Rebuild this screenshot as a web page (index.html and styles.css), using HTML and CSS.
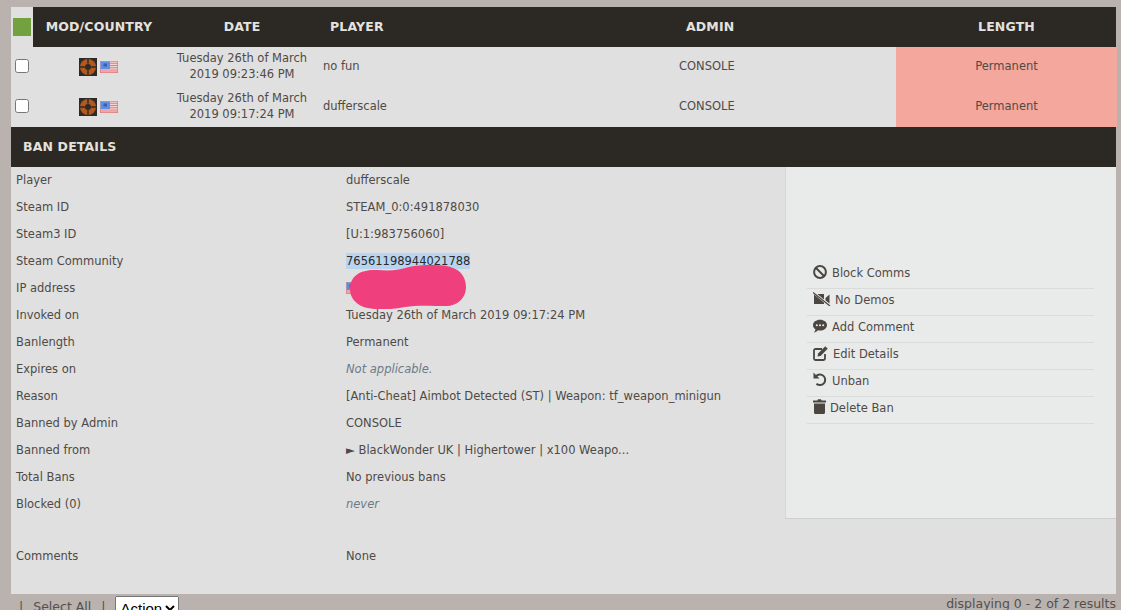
FILE: index.html
```html
<!DOCTYPE html>
<html lang="en">
<head>
<meta charset="utf-8">
<title>Bans</title>
<link rel="stylesheet" href="styles.css">
</head>
<body>
<svg class="defs" width="0" height="0" aria-hidden="true">
  <defs>
    <g id="tf">
      <rect width="18" height="18" fill="#2b2a29"/>
      <circle cx="9" cy="9" r="8" fill="#b4581c"/>
      <path d="M9 1v4.800M9 12.200v4.800M1 9h4.800M12.200 9h4.800" stroke="#2b2a29" stroke-width="1.400"/>
      <circle cx="9" cy="9" r="3" fill="#2b2a29"/>
    </g>
    <g id="us">
      <rect width="18" height="12" fill="#b5706c"/>
      <rect x=".5" y=".5" width="17" height="11" fill="#f2d6d6"/>
      <path d="M9 2.200h9M9 4.500h9M9 6.800h9M0 9h18M0 11h18" stroke="#e77" stroke-width="1.100"/>
      <rect x=".5" y=".5" width="9.500" height="7.500" fill="#5c8ee6"/>
      <rect x="3.500" y="2.500" width="3.500" height="3" fill="#3f5fa8"/>
    </g>
  </defs>
</svg>
<main class="panel">
  <div class="row head">
    <div class="chk-head"><span class="green"></span></div>
    <div class="center">MOD/COUNTRY</div>
    <div class="center">DATE</div>
    <div class="pad">PLAYER</div>
    <div class="pad">ADMIN</div>
    <div class="center">LENGTH</div>
  </div>
  <div class="row ban">
    <div class="chk"><input type="checkbox"></div>
    <div class="icons"><svg width="18" height="18"><use href="#tf"/></svg><svg width="18" height="12"><use href="#us"/></svg></div>
    <div class="center">Tuesday 26th of March<br>2019 09:23:46 PM</div>
    <div>no fun</div>
    <div>CONSOLE</div>
    <div class="center perm">Permanent</div>
  </div>
  <div class="row ban">
    <div class="chk"><input type="checkbox"></div>
    <div class="icons"><svg width="18" height="18"><use href="#tf"/></svg><svg width="18" height="12"><use href="#us"/></svg></div>
    <div class="center">Tuesday 26th of March<br>2019 09:17:24 PM</div>
    <div>dufferscale</div>
    <div>CONSOLE</div>
    <div class="center perm">Permanent</div>
  </div>
  <h2 class="details-title">BAN DETAILS</h2>
  <div class="details">
    <div class="info">
      <dl class="facts">
        <dt>Player</dt><dd>dufferscale</dd>
        <dt>Steam ID</dt><dd>STEAM_0:0:491878030</dd>
        <dt>Steam3 ID</dt><dd>[U:1:983756060]</dd>
        <dt>Steam Community</dt><dd><span class="selected">76561198944021788</span></dd>
        <dt>IP address</dt><dd class="ip"><svg class="ipflag" width="18" height="12"><use href="#us"/></svg><svg class="blob" width="118" height="44" viewBox="0 0 120 44" preserveAspectRatio="none"><path d="M2 24C2 10 14 4 30 5c14 1 22 0 32-3 16-3 36-2 42 0 12 3 16 12 16 20 0 12-10 19-20 19-16 0-30-1-42 1-14 3-32 3-42 0C8 39 2 33 2 24z" fill="#f03f7d"/></svg></dd>
        <dt>Invoked on</dt><dd>Tuesday 26th of March 2019 09:17:24 PM</dd>
        <dt>Banlength</dt><dd>Permanent</dd>
        <dt>Expires on</dt><dd class="muted">Not applicable.</dd>
        <dt>Reason</dt><dd>[Anti-Cheat] Aimbot Detected (ST) | Weapon: tf_weapon_minigun</dd>
        <dt>Banned by Admin</dt><dd>CONSOLE</dd>
        <dt>Banned from</dt><dd>► BlackWonder UK | Highertower | x100 Weapo...</dd>
        <dt>Total Bans</dt><dd>No previous bans</dd>
        <dt>Blocked (0)</dt><dd class="muted">never</dd>
      </dl>
      <dl class="facts comments">
        <dt>Comments</dt><dd>None</dd>
      </dl>
    </div>
    <aside class="side">
      <ul class="actions">
        <li><svg class="ic i-ban" width="14" height="14" viewBox="0 0 14 14"><circle cx="7" cy="7" r="5.900" fill="none" stroke="#4b4640" stroke-width="2"/><path d="M3 3l8 8" stroke="#4b4640" stroke-width="2"/></svg>Block Comms</li>
        <li><svg class="ic i-vid" width="18" height="14" viewBox="0 0 18 14"><path d="M1 2h10v10H1zM12.500 6l4-3.500v9l-4-3z" fill="#4b4640"/><path d="M0 0l17 14" stroke="#e9ebea" stroke-width="2.400"/><path d="M0 .5l17 13.500" stroke="#4b4640" stroke-width="1.200"/></svg>No Demos</li>
        <li><svg class="ic i-com" width="14" height="14" viewBox="0 0 14 14"><path d="M7 .8c3.900 0 7 2.400 7 5.400s-3.100 5.400-7 5.400c-.8 0-1.500-.1-2.200-.3C3.800 12.600 2.500 13.400.8 13.600c1-.9 1.500-2 1.600-3.300C.9 9.300 0 7.900 0 6.200 0 3.200 3.100.8 7 .8z" fill="#4b4640"/><g fill="#e9ebea"><circle cx="3.800" cy="6.200" r="1.050"/><circle cx="7" cy="6.200" r="1.050"/><circle cx="10.200" cy="6.200" r="1.050"/></g></svg>Add Comment</li>
        <li><svg class="ic i-edit" width="16" height="16" viewBox="0 0 16 16"><path d="M9 4H2.500C1.700 4 1 4.700 1 5.500V13.500C1 14.300 1.700 15 2.500 15H10.500C11.300 15 12 14.300 12 13.500V9" fill="none" stroke="#4b4640" stroke-width="1.800"/><path d="M4.500 11.500l.6-3L12.300 1.300l2.400 2.400L7.500 10.900z" fill="#4b4640"/></svg>Edit Details</li>
        <li><svg class="ic i-undo" width="14" height="15" viewBox="0 0 14 15"><path d="M3 4.200A5.300 5.300 0 1 1 3.400 11.800" fill="none" stroke="#4b4640" stroke-width="2"/><path d="M.5 .5v6h6z" fill="#4b4640"/></svg>Unban</li>
        <li><svg class="ic i-trash" width="13" height="15" viewBox="0 0 13 15"><path d="M0 1.500h4.300L5 .2h3l.7 1.300H13v2H0zM1 4.500h11V13.500c0 .8-.6 1.500-1.400 1.500H2.400C1.600 15 1 14.300 1 13.500z" fill="#4b4640"/></svg>Delete Ban</li>
      </ul>
    </aside>
  </div>
</main>
<footer class="foot">
  <div class="foot-left"><span>|</span><span>Select All</span><span>|</span><select><option>Action</option></select></div>
  <div>displaying 0 - 2 of 2 results</div>
</footer>
</body>
</html>
```
FILE: styles.css
```css
html, body { margin: 0; height: 100%; overflow: hidden; }
body {
  background: #b9b2ae;
  font-family: "DejaVu Sans", Verdana, sans-serif;
  font-size: 11.5px;
  color: #4f4a46;
  padding: 7px 5px 0 11px;
  box-sizing: border-box;
}
.defs { position: absolute; }
.panel { background: #e0e0e0; height: 587px; display: flex; flex-direction: column; }
.row {
  display: grid;
  grid-template-columns: 22px 132px 154px 356px 221px 221px;
  height: 40px;
  line-height: 16px;
}
.row > div { display: flex; align-items: center; }
.row .center { justify-content: center; text-align: center; }
.ban > div { padding-bottom: 2px; }
.ban > div:nth-child(4), .ban > div:nth-child(5) { padding-left: 4px; }
.head { background: #2c2824; color: #e4e2df; font-weight: 700; font-size: 12.5px; letter-spacing: .15px; }
.row > .pad { padding-left: 11px; }
.chk-head { background: #e0e0e0; justify-content: center; }
.green { width: 18px; height: 18px; background: #74a13f; display: block; }
.chk { justify-content: center; }
.chk input { width: 14px; height: 14px; margin: 0; }
.ban > .icons { gap: 3px; padding: 0 0 0 46px; }
.perm { background: #f4a79c; }
.details-title {
  margin: 0;
  background: #2c2824;
  color: #e4e2df;
  height: 40px;
  line-height: 40px;
  padding-left: 12px;
  font-size: 12.5px;
  letter-spacing: .15px;
}
.details { display: flex; flex: 1; min-height: 0; }
.info { width: 774px; }
.facts {
  margin: 0;
  display: grid;
  grid-template-columns: 330px 1fr;
  grid-auto-rows: 27px;
  line-height: 26px;
  padding-left: 5px;
}
.facts dd { margin: 0; position: relative; }
.comments { margin-top: 25px; }
.muted { font-style: italic; color: #6b7b88; }
.selected { background: #b9d4ef; color: #2a2a2a; display: inline-block; line-height: 16px; }
.ipflag { vertical-align: -2px; }
.blob { position: absolute; left: 2px; top: -10px; }
.side {
  width: 331px;
  height: 352px;
  box-sizing: border-box;
  background: #e9ebea;
  border-left: 1px solid #d6d6d6;
  border-bottom: 1px solid #cfcfcf;
  padding: 0 22px 0 21px;
  display: flex;
  align-items: center;
}
.actions { list-style: none; margin: 0; padding: 0; width: 100%; }
.actions li {
  height: 22px;
  border-bottom: 1px solid #d9dcdb;
  display: flex;
  align-items: center;
  padding: 0 0 4px 6px;
  line-height: 20px;
}
.ic { flex: none; margin-right: 5px; position: relative; top: -1px; }
.i-vid { margin-right: 4px; }
.i-edit { margin-right: 4px; }
.i-trash { margin-right: 4px; }
.foot {
  display: flex;
  justify-content: space-between;
  font-size: 12.5px;
  line-height: 16px;
  color: #54504c;
  height: 20px;
  padding-top: 2px;
}
.foot-left { display: flex; gap: 10px; padding-left: 8px; align-items: flex-start; }
.foot-left > span { position: relative; top: 3px; }
.foot select { font: 15px "Liberation Sans", Arial, sans-serif; height: 24px; width: 64px; }
```
